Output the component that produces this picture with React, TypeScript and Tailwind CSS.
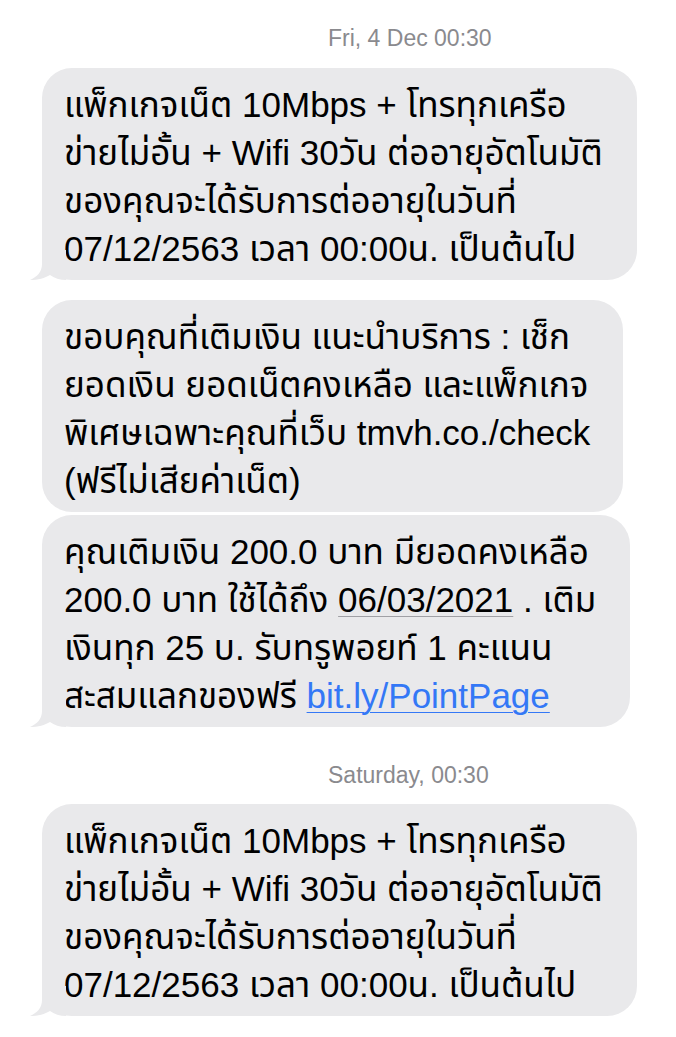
import React from 'react';

const packageLines = [
  'แพ็กเกจเน็ต 10Mbps + โทรทุกเครือ',
  'ข่ายไม่อั้น + Wifi 30วัน ต่ออายุอัตโนมัติ',
  'ของคุณจะได้รับการต่ออายุในวันที่',
  '07/12/2563 เวลา 00:00น. เป็นต้นไป',
];

function Tail() {
  return (
    <svg
      className="absolute left-[-12px] bottom-0"
      width="36"
      height="30"
      viewBox="0 0 36 30"
    >
      <path
        d="M12 0 L12 14 C12 22 7 27 0 30 C8 30 15 28 20 25 C24 28 30 30 36 30 L36 0 Z"
        fill="#e9e9eb"
      />
    </svg>
  );
}

function Bubble({ width, tail, lines }: { width: string; tail: boolean; lines: React.ReactNode[] }) {
  return (
    <div className={`relative ${width}`}>
      <div className="rounded-[30px] bg-[#e9e9eb] pl-[22px] pr-2 pt-[13px] pb-[7px]">
        {lines.map((line, i) => (
          <div key={i} className="whitespace-nowrap leading-[48px]">
            {line}
          </div>
        ))}
      </div>
      {tail && <Tail />}
    </div>
  );
}

function DateLabel({ day, time }: { day: string; time: string }) {
  return (
    <div className="pl-[286px] text-[23px] leading-[28px] text-[#8a8a8e]">
      <span className="font-medium">{day}</span> {time}
    </div>
  );
}

export default function App() {
  return (
    <div
      className="w-[676px] h-[1037px] overflow-hidden bg-white text-black text-[35px]"
      style={{ fontFamily: '"Liberation Sans", "Noto Sans Thai", "Noto Sans", sans-serif' }}
    >
      <div className="flex flex-col pl-[42px] pt-[24px]">
        <DateLabel day="Fri, 4 Dec" time="00:30" />

        <div className="mt-[16px]">
          <Bubble width="w-[595px]" tail lines={packageLines} />
        </div>

        <div className="mt-[20px]">
          <Bubble
            width="w-[581px]"
            tail={false}
            lines={[
              'ขอบคุณที่เติมเงิน แนะนำบริการ : เช็ก',
              'ยอดเงิน ยอดเน็ตคงเหลือ และแพ็กเกจ',
              'พิเศษเฉพาะคุณที่เว็บ tmvh.co./check',
              '(ฟรีไม่เสียค่าเน็ต)',
            ]}
          />
        </div>

        <div className="mt-[3px]">
          <Bubble
            width="w-[588px]"
            tail
            lines={[
              'คุณเติมเงิน 200.0 บาท มียอดคงเหลือ',
              <>
                200.0 บาท ใช้ได้ถึง{' '}
                <span className="underline decoration-[#a0a0a5] decoration-1 underline-offset-4">06/03/2021</span> . เติม
              </>,
              'เงินทุก 25 บ. รับทรูพอยท์ 1 คะแนน',
              <>
                สะสมแลกของฟรี{' '}
                <span className="text-[#3478f6] underline decoration-1 underline-offset-4">bit.ly/PointPage</span>
              </>,
            ]}
          />
        </div>

        <div className="mt-[34px]">
          <DateLabel day="Saturday," time="00:30" />
        </div>

        <div className="mt-[15px]">
          <Bubble width="w-[595px]" tail lines={packageLines} />
        </div>
      </div>
    </div>
  );
}
